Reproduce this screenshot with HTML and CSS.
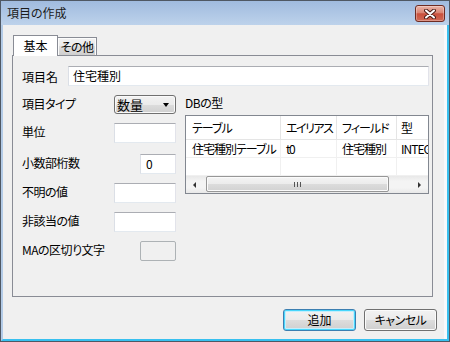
FILE: index.html
```html
<!DOCTYPE html>
<html lang="ja">
<head>
<meta charset="utf-8">
<title>項目の作成</title>
<link rel="stylesheet" href="styles.css">
</head>
<body>
<div class="window">
  <div class="titlebar">
    <span class="title">項目の作成</span>
    <div class="close">
      <svg width="12" height="10" viewBox="0 0 12 10">
        <path d="M2 1.5 L10 8.5 M10 1.5 L2 8.5" stroke="#4a1c16" stroke-width="4" stroke-linecap="round"/>
        <path d="M2 1.5 L10 8.5 M10 1.5 L2 8.5" stroke="#ffffff" stroke-width="2" stroke-linecap="round"/>
      </svg>
    </div>
  </div>
  <div class="frame">
    <div class="client">
      <div class="tabs">
        <div class="tab active">基本</div>
        <div class="tab other">その他</div>
      </div>
      <div class="panel">
        <div class="row-name">
          <span class="name-label">項目名</span>
          <div class="textbox wide">住宅種別</div>
        </div>
        <div class="main">
          <div class="fields">
            <div class="field combo-row">
              <span class="label">項目タイプ</span>
              <div class="combo"><span>数量</span><i class="arrow"></i></div>
            </div>
            <div class="field">
              <span class="label">単位</span>
              <div class="textbox mid"></div>
            </div>
            <div class="field decimal">
              <span class="label">小数部桁数</span>
              <div class="textbox small">0</div>
            </div>
            <div class="field">
              <span class="label">不明の値</span>
              <div class="textbox mid"></div>
            </div>
            <div class="field">
              <span class="label">非該当の値</span>
              <div class="textbox mid"></div>
            </div>
            <div class="field">
              <span class="label">MAの区切り文字</span>
              <div class="textbox small disabled"></div>
            </div>
          </div>
          <div class="db">
            <div class="db-label">DBの型</div>
            <div class="listview">
              <div class="lv-row lv-head">
                <div class="cell c1">テーブル</div>
                <div class="cell c2">エイリアス</div>
                <div class="cell c3">フィールド</div>
                <div class="cell c4">型</div>
              </div>
              <div class="lv-row lv-data">
                <div class="cell c1">住宅種別テーブル</div>
                <div class="cell c2">t0</div>
                <div class="cell c3">住宅種別</div>
                <div class="cell c4">INTEGER</div>
              </div>
              <div class="lv-row lv-data">
                <div class="cell c1"></div>
                <div class="cell c2"></div>
                <div class="cell c3"></div>
                <div class="cell c4"></div>
              </div>
              <div class="hscroll">
                <div class="sb-btn"><i class="tri-left"></i></div>
                <div class="thumb"><span class="grip"></span><span class="grip"></span><span class="grip"></span></div>
                <div class="sb-btn right"><i class="tri-right"></i></div>
              </div>
            </div>
          </div>
        </div>
      </div>
      <div class="buttons">
        <div class="btn default">追加</div>
        <div class="btn">キャンセル</div>
      </div>
    </div>
  </div>
</div>
</body>
</html>
```
FILE: styles.css
```css
html, body {
  margin: 0;
  padding: 0;
}
body {
  font-family: "Noto Sans CJK JP", "Liberation Sans", sans-serif;
  font-size: 12px;
  font-feature-settings: "palt";
  color: #000;
  width: 450px;
  height: 342px;
  overflow: hidden;
}
.window {
  width: 450px;
  height: 342px;
  box-sizing: border-box;
  border: 1px solid #4f5864;
  display: flex;
  flex-direction: column;
  background: linear-gradient(#a0bbdf, #bdd2eb 24px, #bdd2eb);
}
.titlebar {
  height: 24px;
  flex: none;
  display: flex;
  justify-content: space-between;
  align-items: flex-start;
}
.title {
  padding-left: 6px;
  line-height: 24px;
  color: #1b1b1b;
}
.close {
  margin: 4px 4px 0 0;
  width: 30px;
  height: 17px;
  box-sizing: border-box;
  border: 1px solid #6e2b22;
  border-radius: 3px;
  background: linear-gradient(#eab4a8, #da8573 45%, #c9503c 52%, #d06a56);
  box-shadow: inset 0 0 0 1px rgba(255, 255, 255, 0.3);
  display: flex;
  align-items: center;
  justify-content: center;
}
.frame {
  flex: 1;
  min-width: 0;
  display: flex;
  border-left: 2px solid #b3cbe7;
  border-right: 2px solid #38c0ef;
  border-bottom: 2px solid #38c0ef;
}
.client {
  flex: 1;
  min-width: 0;
  background: #f0f0f0;
  border-right: 3px solid #f6f9fc;
  padding: 10px 11px 0 9px;
  display: flex;
  flex-direction: column;
}
.tabs {
  display: flex;
  align-items: flex-end;
  height: 20px;
  margin-left: 1px;
  position: relative;
  z-index: 1;
}
.tab {
  box-sizing: border-box;
  border: 1px solid #898c95;
  border-bottom: none;
  text-align: center;
}
.tab.active {
  width: 45px;
  height: 21px;
  margin-bottom: -1px;
  background: #fff;
  line-height: 19px;
}
.tab.other {
  width: 40px;
  height: 18px;
  margin-left: -1px;
  background: linear-gradient(#f2f2f2, #ebebeb 50%, #dddddd 50%, #cfcfcf);
  box-shadow: inset 0 1px 0 #fcfcfc, inset 1px 0 0 #fcfcfc, inset -1px 0 0 #fcfcfc;
  line-height: 18px;
  letter-spacing: -0.5px;
}
.panel {
  height: 242px;
  min-width: 0;
  box-sizing: border-box;
  border: 1px solid #898c95;
  padding: 10px 3px 0 9px;
}
.row-name {
  display: flex;
  align-items: center;
  height: 20px;
}
.name-label {
  width: 46px;
  flex: none;
}
.textbox {
  box-sizing: border-box;
  height: 20px;
  background: #fff;
  border: 1px solid;
  border-color: #abadb3 #e2e3ea #e3e9ef #dbdfe6;
  padding-left: 4px;
  line-height: 18px;
}
.textbox.wide {
  flex: 1;
  min-width: 0;
}
.textbox.mid {
  width: 62px;
}
.textbox.small {
  width: 36px;
  padding-left: 5px;
}
.textbox.disabled {
  background: #f0f0f0;
  border-color: #adb2b5;
  border-radius: 2px;
}
.main {
  display: flex;
  margin-top: 9px;
  min-width: 0;
}
.fields {
  width: 154px;
  flex: none;
  display: flex;
  flex-direction: column;
  gap: 9px;
}
.field {
  display: flex;
  justify-content: space-between;
  align-items: center;
  height: 20px;
}
.field.combo-row {
  height: 19px;
}
.field.decimal {
  margin-top: 2px;
}
.label {
  padding-bottom: 3px;
  white-space: nowrap;
  letter-spacing: -0.5px;
}
.combo {
  box-sizing: border-box;
  width: 62px;
  height: 19px;
  border: 1px solid #707070;
  border-radius: 3px;
  background: linear-gradient(#f2f2f2, #ebebeb 50%, #dddddd 50%, #cfcfcf);
  box-shadow: inset 0 0 0 1px #fafafa;
  display: flex;
  align-items: center;
  justify-content: space-between;
  padding: 0 6px 0 2px;
  font-size: 13px;
}
.arrow {
  width: 0;
  height: 0;
  border-left: 3.5px solid transparent;
  border-right: 3.5px solid transparent;
  border-top: 4px solid #000;
}
.db {
  flex: 1;
  min-width: 0;
  margin-left: 9px;
  display: flex;
  flex-direction: column;
}
.db-label {
  height: 16px;
  line-height: 16px;
  letter-spacing: -0.5px;
}
.listview {
  margin-top: 4px;
  border: 1px solid #828790;
  background: #fff;
  overflow: hidden;
  min-width: 0;
}
.lv-row {
  display: flex;
  white-space: nowrap;
  letter-spacing: -1px;
}
.lv-head {
  height: 24px;
  box-sizing: border-box;
  border-bottom: 1px solid #e5e5e5;
  line-height: 23px;
}
.lv-data {
  height: 18px;
  box-sizing: border-box;
  border-bottom: 1px solid #f0f0f0;
  line-height: 17px;
}
.cell {
  box-sizing: border-box;
  flex: none;
  padding-left: 6px;
  border-right: 1px solid #e5e5e5;
  overflow: hidden;
}
.lv-data .cell {
  border-right-color: #f0f0f0;
}
.c1 { width: 95px; }
.c2 { width: 56px; padding-left: 5px; letter-spacing: -1.5px; }
.c3 { width: 60px; padding-left: 5px; }
.c4 { width: 60px; padding-left: 4px; }
.hscroll {
  height: 17px;
  display: flex;
  align-items: stretch;
  background: linear-gradient(#e8e8e8, #f4f4f4 30%, #f4f4f4 70%, #e8e8e8);
}
.sb-btn {
  width: 17px;
  flex: none;
  display: flex;
  align-items: center;
  justify-content: center;
}
.sb-btn.right {
  margin-left: auto;
}
.tri-left {
  width: 0;
  height: 0;
  border-top: 3.5px solid transparent;
  border-bottom: 3.5px solid transparent;
  border-right: 3.5px solid #333;
}
.tri-right {
  width: 0;
  height: 0;
  border-top: 3.5px solid transparent;
  border-bottom: 3.5px solid transparent;
  border-left: 3.5px solid #333;
}
.thumb {
  margin-left: 3px;
  width: 183px;
  flex: none;
  box-sizing: border-box;
  height: 16px;
  border: 1px solid #979797;
  border-radius: 2px;
  background: linear-gradient(#f4f4f4, #ececec 50%, #dcdcdc 50%, #d2d2d2);
  box-shadow: inset 0 0 0 1px #fbfbfb;
  display: flex;
  align-items: center;
  justify-content: center;
  gap: 2px;
}
.grip {
  width: 1px;
  height: 5px;
  background: #555;
}
.buttons {
  display: flex;
  justify-content: flex-end;
  gap: 8px;
  margin-top: 12px;
  margin-right: -4px;
}
.btn {
  width: 73px;
  height: 22px;
  box-sizing: border-box;
  border: 1px solid #707070;
  border-radius: 3px;
  background: linear-gradient(#f2f2f2, #ebebeb 50%, #dddddd 50%, #cfcfcf);
  box-shadow: inset 0 0 0 1px #fbfbfb;
  text-align: center;
  line-height: 20px;
}
.btn.default {
  border-color: #3c7fb1;
  box-shadow: inset 0 0 0 1px #48d6fb, inset 0 0 0 2px #c4eefc;
}
.btn:last-child {
  letter-spacing: -0.5px;
}
```
